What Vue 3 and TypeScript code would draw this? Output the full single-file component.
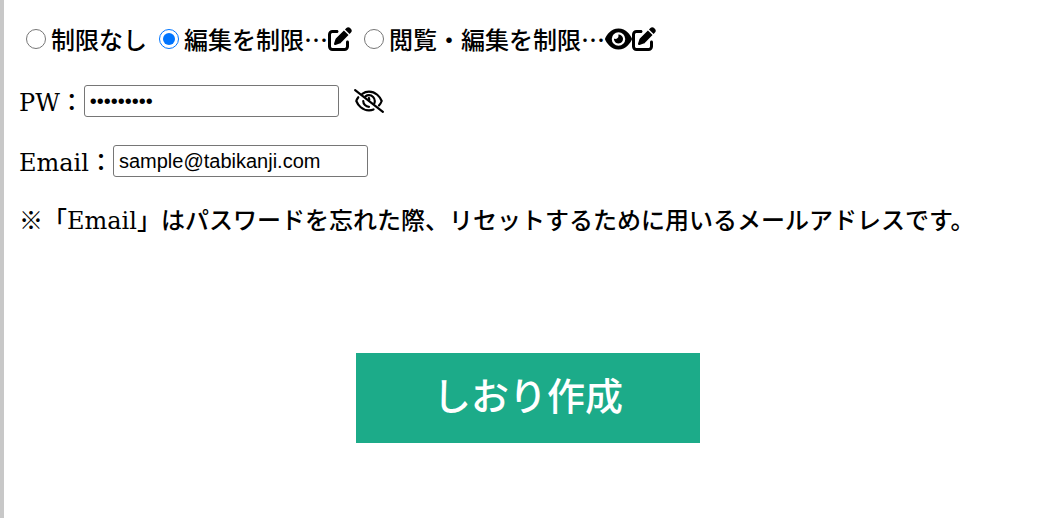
<script setup lang="ts">
import { ref } from 'vue'

type Limit = 'none' | 'edit' | 'all'

const limit = ref<Limit>('edit')
const password = ref('tabikanji')
const email = ref('sample@tabikanji.com')
const visible = ref(false)

const options: { value: Limit; label: string; eye: boolean; pen: boolean }[] = [
  { value: 'none', label: '制限なし', eye: false, pen: false },
  { value: 'edit', label: '編集を制限…', eye: false, pen: true },
  { value: 'all', label: '閲覧・編集を制限…', eye: true, pen: true },
]
</script>

<template>
  <form class="page" lang="ja" @submit.prevent>
    <div class="row options" role="radiogroup" aria-label="制限">
      <label v-for="o in options" :key="o.value" class="option">
        <input v-model="limit" type="radio" name="limit" :value="o.value" />
        <span>{{ o.label }}</span>
        <svg v-if="o.eye" class="eye" viewBox="0 0 576 512" aria-hidden="true">
          <path d="M288 32c-80.8 0-145.5 36.8-192.6 80.6C48.6 156 17.3 208 2.5 243.7c-3.3 7.9-3.3 16.7 0 24.6C17.3 304 48.6 356 95.4 399.4C142.5 443.2 207.2 480 288 480s145.5-36.8 192.6-80.6c46.8-43.5 78.1-95.4 93-131.1c3.3-7.9 3.3-16.7 0-24.6c-14.9-35.7-46.2-87.7-93-131.1C433.5 68.8 368.8 32 288 32zM144 256a144 144 0 1 1 288 0 144 144 0 1 1 -288 0zm144-64c0 35.3-28.7 64-64 64c-7.1 0-13.9-1.2-20.3-3.3c-5.5-1.8-11.9 1.6-11.7 7.4c.3 6.9 1.3 13.8 3.2 20.7c13.7 51.2 66.4 81.6 117.6 67.9s81.6-66.4 67.9-117.6c-11.1-41.5-47.8-69.4-88.6-71.1c-5.8-.2-9.2 6.1-7.4 11.7c2.1 6.4 3.3 13.2 3.3 20.3z" />
        </svg>
        <svg v-if="o.pen" class="pen" viewBox="0 0 512 512" aria-hidden="true">
          <path d="M471.6 21.7c-21.9-21.9-57.3-21.9-79.2 0L362.3 51.7l97.9 97.9 30.1-30.1c21.9-21.9 21.9-57.3 0-79.2L471.6 21.7zm-299.2 220c-6.1 6.1-10.8 13.6-13.5 21.9l-29.6 88.8c-2.9 8.6-.6 18.1 5.8 24.6s15.9 8.7 24.6 5.8l88.8-29.6c8.2-2.7 15.7-7.4 21.9-13.5L437.7 172.3 339.7 74.3 172.4 241.7zM96 64C43 64 0 107 0 160V416c0 53 43 96 96 96H352c53 0 96-43 96-96V320c0-17.7-14.3-32-32-32s-32 14.3-32 32v96c0 17.7-14.3 32-32 32H96c-17.7 0-32-14.3-32-32V160c0-17.7 14.3-32 32-32h96c17.7 0 32-14.3 32-32s-14.3-32-32-32H96z" />
        </svg>
      </label>
    </div>

    <div class="row">
      <label for="pw"><span class="latin">PW</span>：</label>
      <input id="pw" v-model="password" class="field" :type="visible ? 'text' : 'password'" />
      <button class="toggle" type="button" aria-label="パスワードの表示" @click="visible = !visible">
        <svg viewBox="0 0 640 512" aria-hidden="true">
          <g fill="none" stroke="currentColor" stroke-width="46" stroke-linecap="round">
            <path d="M24 24L616 488" />
            <path d="M176 104C214 76 262 56 320 56C462 56 558 168 591 256C580 288 560 322 532 352" />
            <path d="M92 176C72 202 57 230 49 256C82 344 178 456 320 456C356 456 388 449 417 437" />
            <path d="M244 158C266 141 292 132 320 132C388 132 444 188 444 256C444 274 440 290 434 304" />
            <path d="M197 256C197 324 252 380 320 380" />
            <path d="M318 190C334 222 328 232 322 240" />
          </g>
        </svg>
      </button>
    </div>

    <div class="row">
      <label for="email"><span class="latin">Email</span>：</label>
      <input id="email" v-model="email" class="field" type="email" />
    </div>

    <p class="note">※「<span class="latin">Email</span>」はパスワードを忘れた際、リセットするために用いるメールアドレスです。</p>

    <button class="submit" type="submit">しおり作成</button>
  </form>
</template>

<style>
body {
  margin: 0;
  background: #fff;
}
</style>

<style scoped>
.page {
  box-sizing: border-box;
  min-height: 100vh;
  display: flex;
  flex-direction: column;
  gap: 24px;
  padding: 19px 15px 72px;
  border-left: 4px solid #c8c8c8;
  color: #000;
  font-family: "Noto Sans CJK JP", sans-serif;
  font-size: 24px;
  font-weight: 500;
  line-height: 36px;
}

.row {
  display: flex;
  align-items: center;
  height: 36px;
}

.options {
  gap: 12px;
  height: 40px;
  padding-left: 7px;
}

.option {
  display: flex;
  align-items: center;
  white-space: nowrap;
}

.option input {
  width: 20px;
  height: 20px;
  margin: 0 5px 0 0;
}

.option svg {
  height: 24px;
  fill: currentColor;
}

.pen {
  width: 24px;
}

.eye {
  width: 27px;
}

.latin {
  font-family: "DejaVu Serif", serif;
  line-height: 24px;
}

.field {
  box-sizing: border-box;
  width: 255px;
  height: 32px;
  margin: 0;
  padding: 0 5px;
  border: 1px solid #767676;
  border-radius: 3px;
  background: #fff;
  color: #000;
  font-family: "Liberation Sans", Arial, sans-serif;
  font-size: 20px;
}

.toggle {
  display: flex;
  margin: 0 0 0 15px;
  padding: 0;
  border: 0;
  background: none;
  color: #000;
}

.toggle svg {
  width: 30px;
  height: 24px;
}

.note {
  margin: 0;
  line-height: 32px;
}

.submit {
  align-self: center;
  margin: 94px 0 0;
  padding: 12px 77px 20px;
  border: 0;
  background: #1cab89;
  color: #fff;
  font-family: inherit;
  font-size: 38px;
  font-weight: 500;
  line-height: 58px;
}
</style>
